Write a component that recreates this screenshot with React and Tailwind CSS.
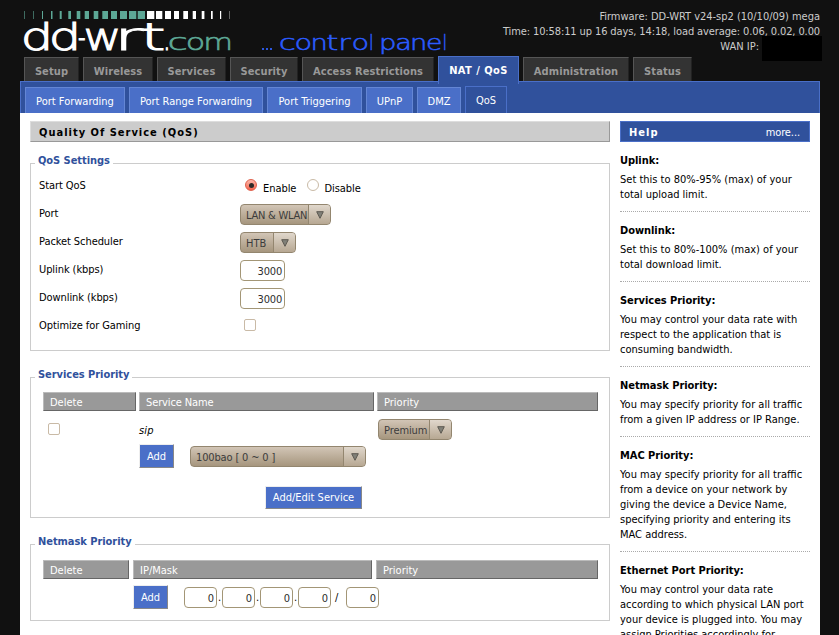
const tabs = [
  { label: "Setup", cls: "w-[55px]" },
  { label: "Wireless", cls: "w-[70px]" },
  { label: "Services", cls: "w-[69px]" },
  { label: "Security", cls: "w-[68px]" },
  { label: "Access Restrictions", cls: "w-[132px]" },
  { label: "NAT / QoS", cls: "w-[81px]", active: true },
  { label: "Administration", cls: "w-[106px]" },
  { label: "Status", cls: "w-[59px]" },
];

const subTabs = [
  { label: "Port Forwarding", cls: "w-[100px]" },
  { label: "Port Range Forwarding", cls: "w-[134px]" },
  { label: "Port Triggering", cls: "w-[95px]" },
  { label: "UPnP", cls: "w-[47px]" },
  { label: "DMZ", cls: "w-[44px]" },
  { label: "QoS", cls: "w-[42px]", active: true },
];

const help = [
  ["Uplink:", ["Set this to 80%-95% (max) of your", "total upload limit."]],
  ["Downlink:", ["Set this to 80%-100% (max) of your", "total download limit."]],
  ["Services Priority:", ["You may control your data rate with", "respect to the application that is", "consuming bandwidth."]],
  ["Netmask Priority:", ["You may specify priority for all traffic", "from a given IP address or IP Range."]],
  ["MAC Priority:", ["You may specify priority for all traffic", "from a device on your network by", "giving the device a Device Name,", "specifying priority and entering its", "MAC address."]],
  ["Ethernet Port Priority:", ["You may control your data rate", "according to which physical LAN port", "your device is plugged into. You may", "assign Priorities accordingly for"]],
];

// [x, width] of each block in the strip above the wordmark
const greenBars = [[24, 1], [33, 1], [42, 1], [51, 1.5], [59.7, 2], [68.3, 2.7], [76.7, 3.6], [84.7, 4.3], [93.7, 4.6], [102.3, 5.7], [111, 6], [120, 7], [129, 7.3], [137.7, 7.3]];
const whiteBars = [[147, 7.3], [156, 6.3], [165, 6], [174, 5], [183.3, 4.7], [192.7, 3.3], [201.7, 2.7], [211, 1.7], [220, 1.2]];

// left and right ink bounds of each letter, in font units of 1/2048 em
const ink = {
  d: [113, 1114], "-": [100, 639], w: [86, 1589], r: [186, 823], t: [55, 754],
  ".": [219, 430], c: [113, 999], o: [113, 1141], m: [186, 1827], n: [186, 1124],
  l: [192, 376], p: [186, 1188], a: [123, 1069], e: [113, 1151],
};

function Letters({ list, size, baseline, fill, weight }) {
  return list.map(([ch, x0, x1], i) => {
    const [a, b] = ink[ch];
    const s = (x1 - x0) / (((b - a) / 2048) * size);
    const tx = x0 - (a / 2048) * size * s;
    return (
      <text key={i} transform={`translate(${tx} ${baseline}) scale(${s} 1)`} fontSize={size} fill={fill} stroke={fill} strokeWidth={weight}>
        {ch}
      </text>
    );
  });
}

function Logo() {
  return (
    <svg width="460" height="57" viewBox="0 0 460 57" className="shrink-0 overflow-visible font-['DejaVu_Sans_Light','DejaVu_Sans',sans-serif] font-extralight">
      {greenBars.map(([x, w], i) => (
        <rect key={x} x={x} y="11" width={w} height="8" fill="#5da896" opacity={i < 2 ? 0.6 : 1} />
      ))}
      {whiteBars.map(([x, w]) => (
        <rect key={x} x={x} y="11" width={w} height="8" fill="#ffffff" />
      ))}
      <rect x="229" y="11" width="1" height="8" fill="#666666" />
      <Letters size={36.5} baseline={49.6} fill="#ffffff" weight={1.1} list={[["d", 23.5, 48.5], ["d", 51.5, 76.5], ["-", 79, 84.5], ["w", 85.5, 119.5], ["r", 120.5, 142], ["t", 142.5, 164], [".", 165.5, 168]]} />
      <Letters size={23.5} baseline={49.8} fill="#5da896" weight={0.6} list={[["c", 169.5, 185.5], ["o", 187.5, 203.5], ["m", 206, 230.5]]} />
      <g fill="#2b57e0">
        <rect x="262" y="48" width="2" height="2" />
        <rect x="266" y="48" width="2" height="2" />
        <rect x="270" y="48" width="2" height="2" />
      </g>
      <Letters
        size={20.5}
        baseline={49.6}
        fill="#2b5cff"
        weight={0.5}
        list={[["c", 280.5, 294], ["o", 296, 310.5], ["n", 313, 325.5], ["t", 327, 337.5], ["r", 341, 350.5], ["o", 353, 367.5], ["l", 370.5, 372], ["p", 381.5, 395], ["a", 397, 409.5], ["n", 412.5, 425], ["e", 427.5, 441], ["l", 444, 445.5]]}
      />
    </svg>
  );
}

function Select({ label, cls }) {
  return (
    <div className={"flex h-[21px] overflow-hidden rounded-[4px] border border-[#93866f] bg-linear-to-b from-[#d2c5b6] to-[#a6967e] text-[#3c3c3c] " + cls}>
      <div className="flex-1 pl-[5px] pt-[3px] whitespace-nowrap">{label}</div>
      <div className="flex w-[22px] items-center justify-center border-l border-[#93866f] bg-linear-to-b from-[#e0d7cc] to-[#b7a893]">
        <svg width="8" height="8" viewBox="0 0 8 8">
          <path d="M0.7 0.7H7.3L4 7.3Z" fill="#808078" stroke="#5c5850" strokeWidth="1" />
        </svg>
      </div>
    </div>
  );
}

function Input({ value, cls }) {
  return (
    <div className={"h-[21px] rounded-[4px] border border-[#a39676] bg-white pr-[2px] pt-[3px] text-right text-[#2e2e2e] " + cls}>{value}</div>
  );
}

function Check() {
  return <div className="size-3 rounded-[2px] border border-[#c9baa6] bg-white" />;
}

function Row({ label, children, pad = "pt-1" }) {
  return (
    <div className="flex h-7">
      <div className="w-[201px] pt-[6px] tracking-[-0.08px]">{label}</div>
      <div className={"flex items-start " + pad}>{children}</div>
    </div>
  );
}

function Panel({ title, cls, children }) {
  return (
    <section className={"flex flex-col border border-[#cccccc] " + cls}>
      <h3 className="-mt-[11px] ml-1 self-start bg-white px-[3px] font-bold tracking-[-0.05px] text-[#30519c]">{title}</h3>
      {children}
    </section>
  );
}

function Th({ children, cls }) {
  return (
    <div className={"h-[19px] border border-[#666666] border-t-[#bbbbbb] border-l-[#bbbbbb] bg-[#999999] pl-[6px] pt-[2px] text-white " + cls}>{children}</div>
  );
}

function Button({ children, cls }) {
  return (
    <div className={"flex items-center justify-center border border-[#888888] border-t-[#eeeeee] border-l-[#eeeeee] bg-[#4a6fc8] text-white " + cls}>{children}</div>
  );
}

export default function App() {
  return (
    <div className="flex h-[635px] w-[839px] flex-col overflow-hidden bg-[#111111] font-['DejaVu_Sans_Condensed','Open_Sans',sans-serif] text-[11px] leading-[15px] text-black">
      <header className="flex h-[57px] justify-between pr-[19px]">
        <Logo />
        <div className="relative z-10 pt-[9px] text-right whitespace-nowrap text-[#cccccc]">
          <div className="tracking-[-0.02px]">Firmware: DD-WRT v24-sp2 (10/10/09) mega</div>
          <div className="tracking-[-0.11px]">Time: 10:58:11 up 16 days, 14:18, load average: 0.06, 0.02, 0.00</div>
          <div className="-mr-[2px] flex justify-end gap-[3px]">
            <span>WAN IP:</span>
            <span className="-mt-[3px] h-[25px] w-[60px] bg-black" />
          </div>
        </div>
      </header>

      <nav className="flex h-6 shrink-0 gap-1 pl-6">
        {tabs.map((t) =>
          t.active ? (
            <div key={t.label} className={"relative z-10 -mt-px h-7 border border-b-0 border-[#4a6fc8] bg-[#30519c] pt-[6px] text-center font-bold tracking-[0.45px] whitespace-nowrap text-white " + t.cls}>
              {t.label}
            </div>
          ) : (
            <div key={t.label} className={"border border-b-0 border-t-[#555555] border-l-[#555555] border-r-[#222222] bg-[#333333] pt-[6px] text-center font-bold tracking-[0.1px] whitespace-nowrap text-[#999999] " + t.cls}>
              {t.label}
            </div>
          )
        )}
      </nav>

      <div className="ml-5 flex w-[800px] grow flex-col bg-white">
        <nav className="flex h-8 shrink-0 items-end gap-1 border border-b-0 border-[#4a6fc8] bg-[#30519c] pl-1">
          {subTabs.map((t) =>
            t.active ? (
              <div key={t.label} className={"h-[27px] border border-b-0 border-[#4a6fc8] bg-[#30519c] pt-[6px] text-center whitespace-nowrap text-white " + t.cls}>
                {t.label}
              </div>
            ) : (
              <div key={t.label} className={"h-[26px] border border-b-0 border-[#6486d4] bg-[#4a6fc8] pt-[6px] text-center whitespace-nowrap text-white " + t.cls}>
                {t.label}
              </div>
            )
          )}
        </nav>

        <div className="flex gap-[10px] px-[10px] pt-2">
          <main className="w-[580px]">
            <h2 className="h-[21px] border border-[#999999] border-t-[#dddddd] border-l-[#dddddd] bg-[#cccccc] pl-2 pt-[3px] font-bold tracking-[1px]">
              Quality Of Service (QoS)
            </h2>

            <Panel title="QoS Settings" cls="mt-[21px] h-[188px]">
              <div className="pt-1 pl-2">
                <Row label="Start QoS" pad="pt-[7px] pl-[5px]">
                  <div className="flex size-3 items-center justify-center rounded-full border border-[#e0604c] bg-linear-to-b from-[#fbb9ad] to-[#f4604a]">
                    <div className="size-[5px] rounded-full bg-[#2e2a28]" />
                  </div>
                  <span className="ml-[6px] pt-[2px] tracking-[-0.05px]">Enable</span>
                  <div className="ml-[11px] size-3 rounded-full border border-[#c9baa6] bg-white" />
                  <span className="ml-[5px] pt-[2px] tracking-[-0.05px]">Disable</span>
                </Row>
                <Row label="Port"><Select label="LAN & WLAN" cls="w-[91px] tracking-[-0.25px]" /></Row>
                <Row label="Packet Scheduler"><Select label="HTB" cls="w-14" /></Row>
                <Row label="Uplink (kbps)"><Input value="3000" cls="w-[45px] tracking-[-0.2px]" /></Row>
                <Row label="Downlink (kbps)"><Input value="3000" cls="w-[45px] tracking-[-0.2px]" /></Row>
                <Row label="Optimize for Gaming" pad="pt-[7px] pl-1"><Check /></Row>
              </div>
            </Panel>

            <Panel title="Services Priority" cls="mt-[26px] h-[141px]">
              <div className="pl-3 pt-[10px]">
                <div className="flex gap-[3px]">
                  <Th cls="w-[93px]">Delete</Th>
                  <Th cls="w-[235px] tracking-[-0.12px]">Service Name</Th>
                  <Th cls="w-[221px]">Priority</Th>
                </div>
                <div className="mt-2 flex h-[25px] items-start">
                  <div className="w-24 pl-[5px] pt-1"><Check /></div>
                  <div className="w-[239px] pt-1 tracking-[0.2px] italic">sip</div>
                  <Select label="Premium" cls="w-[74px] tracking-[-0.1px]" />
                </div>
                <div className="flex items-start pl-24">
                  <Button cls="h-6 w-[35px]">Add</Button>
                  <Select label="100bao [ 0 ~ 0 ]" cls="ml-4 mt-[2px] w-44 tracking-[-0.15px]" />
                </div>
                <div className="mt-[18px] pl-[222px]">
                  <Button cls="h-[23px] w-[97px]">Add/Edit Service</Button>
                </div>
              </div>
            </Panel>

            <Panel title="Netmask Priority" cls="mt-[26px] h-[77px]">
              <div className="pl-3 pt-[11px]">
                <div className="flex gap-1">
                  <Th cls="w-[86px]">Delete</Th>
                  <Th cls="w-[239px]">IP/Mask</Th>
                  <Th cls="w-[222px]">Priority</Th>
                </div>
                <div className="mt-[6px] flex items-start pl-[90px]">
                  <Button cls="mr-4 h-6 w-[35px]">Add</Button>
                  <div className="flex pt-[2px]">
                    <Input value="0" cls="w-[33px]" />
                    <span className="w-[5px] pt-[3px] text-center">.</span>
                    <Input value="0" cls="w-[33px]" />
                    <span className="w-[5px] pt-[3px] text-center">.</span>
                    <Input value="0" cls="w-[33px]" />
                    <span className="w-[5px] pt-[3px] text-center">.</span>
                    <Input value="0" cls="w-[33px]" />
                    <span className="w-[15px] pt-[3px] pl-1">/</span>
                    <Input value="0" cls="w-[33px]" />
                  </div>
                </div>
              </div>
            </Panel>
          </main>

          <aside className="w-[190px]">
            <div className="flex h-[21px] justify-between border border-[#4a6fc8] bg-[#30519c] pt-[3px] pr-[9px] pl-2 text-white">
              <span className="font-bold tracking-[1px]">Help</span>
              <span className="tracking-[-0.1px]">more...</span>
            </div>
            {help.map(([title, lines]) => (
              <div key={title} className="mt-[11px] border-b border-dotted border-[#aaaaaa] pb-[9px] whitespace-nowrap">
                <div className="mb-1 font-bold tracking-[-0.05px]">{title}</div>
                {lines.map((l) => (
                  <div key={l}>{l}</div>
                ))}
              </div>
            ))}
          </aside>
        </div>
      </div>
    </div>
  );
}
